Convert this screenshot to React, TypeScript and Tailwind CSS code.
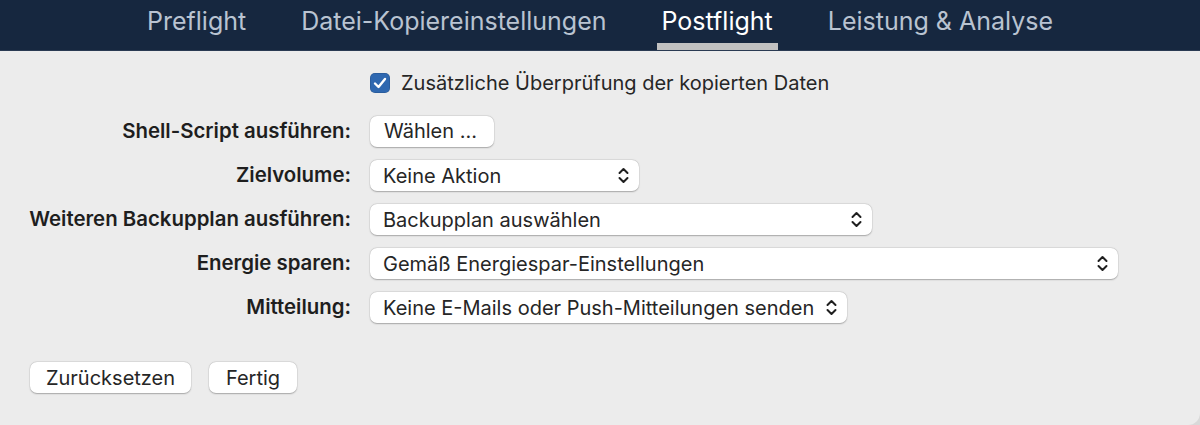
import React from "react";

const Chevrons = () => (
  <svg width="11" height="17" viewBox="0 0 11 17" fill="none" stroke="#1f1f1f" strokeWidth="2" strokeLinecap="round" strokeLinejoin="round">
    <path d="M1.5 6 L5.5 2 L9.5 6" />
    <path d="M1.5 11 L5.5 15 L9.5 11" />
  </svg>
);

const ctl =
  "h-[31px] bg-white rounded-[7px] shadow-[0_0.5px_1.5px_rgba(0,0,0,0.28),0_0_0_0.5px_rgba(0,0,0,0.06)] text-[20px] text-[#262626] flex items-center";

const Select = ({ text, w }: { text: string; w: string }) => (
  <div className={`${ctl} ${w} pl-[13px] pr-[10px] justify-between`}>
    <span className="whitespace-nowrap">{text}</span>
    <Chevrons />
  </div>
);

const Label = ({ children }: { children: React.ReactNode }) => (
  <div className="text-right text-[20.4px] font-semibold text-[#1e1e1e] whitespace-nowrap">{children}</div>
);

export default function App() {
  const tabs = ["Preflight", "Datei-Kopiereinstellungen", "Postflight", "Leistung & Analyse"];
  return (
    <div className="w-[1200px] h-[425px] bg-[#d9d9d9] overflow-hidden" style={{ fontFamily: "Inter, 'Noto Sans', sans-serif" }}>
      <div className="h-full bg-[#ececec] rounded-br-[12px] flex flex-col">
        <div className="h-[51px] bg-[#16273f] flex justify-center items-stretch gap-x-[45px] border-b border-[#2a3a52]">
          {tabs.map((t) => {
            const active = t === "Postflight";
            return (
              <div key={t} className="relative px-[5px] flex items-start pt-[5px]">
                <span className={`text-[25px] leading-[32px] ${active ? "text-white" : "text-[#b9c3d1]"}`}>{t}</span>
                {active && <div className="absolute left-0 right-0 bottom-0 h-[7px] bg-[#c1c1c1]" />}
              </div>
            );
          })}
        </div>

        <div className="grid grid-cols-[351px_auto] gap-x-[19px] items-center pt-[22px]">
          <div />
          <div className="flex items-center gap-[11px] h-[20px]">
            <div className="w-[20px] h-[20px] rounded-[5px] bg-[#2f68b0] flex items-center justify-center shadow-[inset_0_0_0_0.5px_rgba(0,0,0,0.2)]">
              <svg width="14" height="12" viewBox="0 0 14 12" fill="none" stroke="white" strokeWidth="2.4" strokeLinecap="round" strokeLinejoin="round">
                <path d="M2 6.5 L5.5 10 L12 2" />
              </svg>
            </div>
            <span className="text-[20px] text-[#262626] whitespace-nowrap">Zusätzliche Überprüfung der kopierten Daten</span>
          </div>

          <div className="h-[32px] mt-[22px]"><div className="h-full flex items-center justify-end"><Label>Shell-Script ausführen:</Label></div></div>
          <div className="mt-[22px] flex">
            <div className={`${ctl} w-[124px] pl-[14px]`}>Wählen ...</div>
          </div>

          <div className="mt-[13px] flex justify-end"><Label>Zielvolume:</Label></div>
          <div className="mt-[13px]"><Select text="Keine Aktion" w="w-[269px]" /></div>

          <div className="mt-[13px] flex justify-end"><Label>Weiteren Backupplan ausführen:</Label></div>
          <div className="mt-[13px]"><Select text="Backupplan auswählen" w="w-[502px]" /></div>

          <div className="mt-[13px] flex justify-end"><Label>Energie sparen:</Label></div>
          <div className="mt-[13px]"><Select text="Gemäß Energiespar-Einstellungen" w="w-[748px]" /></div>

          <div className="mt-[13px] flex justify-end"><Label>Mitteilung:</Label></div>
          <div className="mt-[13px]"><Select text="Keine E-Mails oder Push-Mitteilungen senden" w="w-[477px]" /></div>
        </div>

        <div className="flex gap-[18px] pl-[30px] mt-[39px]">
          <div className={`${ctl} px-[14px] w-[161px] justify-center`}>Zurücksetzen</div>
          <div className={`${ctl} px-[14px] w-[88px] justify-center`}>Fertig</div>
        </div>
      </div>
    </div>
  );
}
